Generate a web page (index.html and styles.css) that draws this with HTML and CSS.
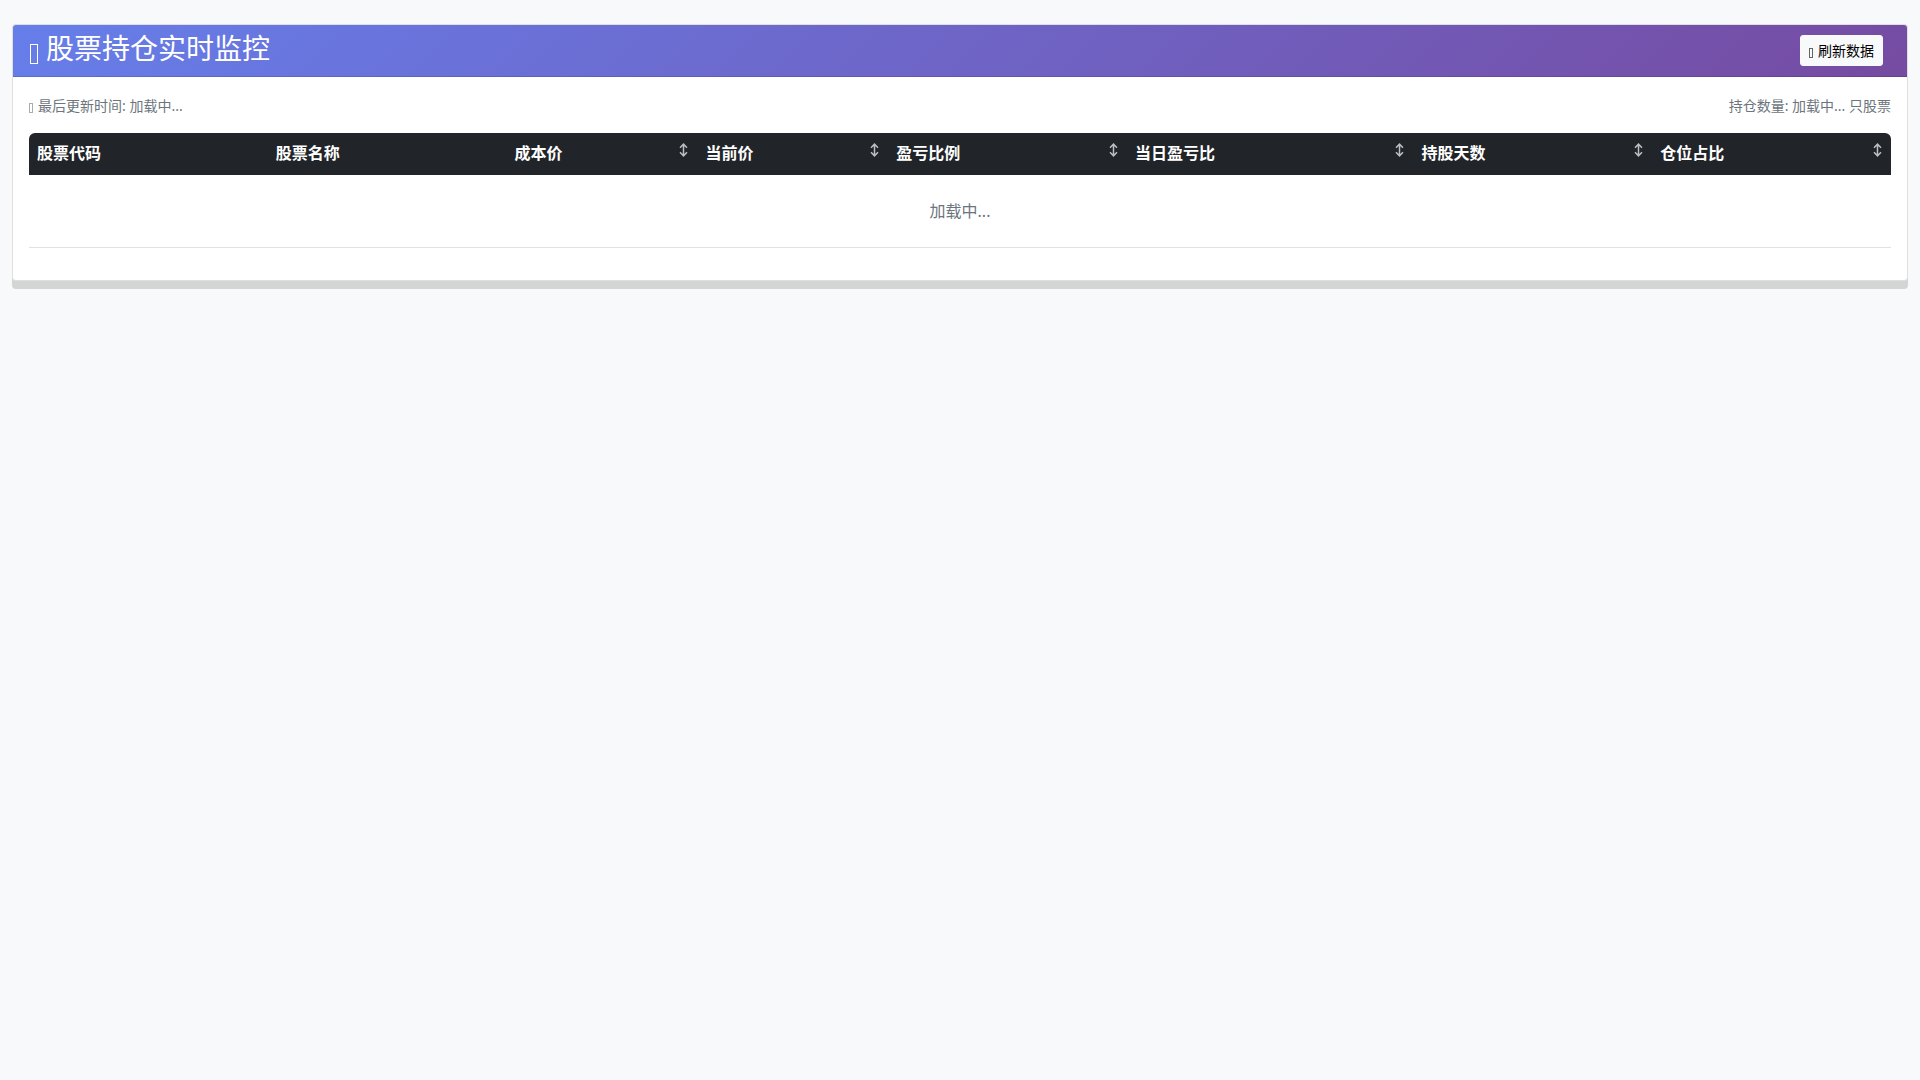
FILE: index.html
```
<!DOCTYPE html>
<html lang="zh-CN">
<head>
    <meta charset="UTF-8">
    <meta name="viewport" content="width=device-width, initial-scale=1.0">
    <title>股票持仓实时监控</title>
    <link rel="stylesheet" href="styles.css">
</head>
<body>
    <svg width="0" height="0" class="sprite">
        <symbol id="sort" viewBox="0 0 9 14">
            <path d="M4.5 1.2V12.8M1 4.8L4.5 1.2L8 4.8M1 9.2L4.5 12.8L8 9.2" fill="none" stroke="currentColor" stroke-width="1.5"/>
        </symbol>
    </svg>
    <main class="container">
        <div class="card">
            <div class="card-header">
                <h1 class="title"><span class="icon icon-lg"></span>股票持仓实时监控</h1>
                <button type="button" class="btn-refresh"><span class="icon"></span>刷新数据</button>
            </div>
            <div class="card-body">
                <div class="info">
                    <span><span class="icon"></span>最后更新时间: <span id="updateTime">加载中...</span></span>
                    <span>持仓数量: <span id="stockCount">加载中...</span> 只股票</span>
                </div>
                <table class="stock-table">
                    <thead>
                        <tr>
                            <th>股票代码</th>
                            <th>股票名称</th>
                            <th class="sortable">成本价<svg class="sort-icon"><use href="#sort"/></svg></th>
                            <th class="sortable">当前价<svg class="sort-icon"><use href="#sort"/></svg></th>
                            <th class="sortable">盈亏比例<svg class="sort-icon"><use href="#sort"/></svg></th>
                            <th class="sortable">当日盈亏比<svg class="sort-icon"><use href="#sort"/></svg></th>
                            <th class="sortable">持股天数<svg class="sort-icon"><use href="#sort"/></svg></th>
                            <th class="sortable">仓位占比<svg class="sort-icon"><use href="#sort"/></svg></th>
                        </tr>
                    </thead>
                    <tbody>
                        <tr>
                            <td colspan="8" class="loading">加载中...</td>
                        </tr>
                    </tbody>
                </table>
            </div>
        </div>
    </main>
</body>
</html>
```
FILE: styles.css
```
* {
    box-sizing: border-box;
}

body {
    margin: 0;
    background: #f8f9fa;
    color: #212529;
    font-family: "Noto Sans", "Noto Sans CJK SC", sans-serif;
    font-size: 16px;
    line-height: 24px;
}

.sprite {
    position: absolute;
}

.container {
    padding: 24px 12px;
}

.card {
    background: #fff;
    border: 1px solid rgba(0, 0, 0, 0.125);
    border-radius: 4px;
    box-shadow: 0 8px 0 rgba(0, 0, 0, 0.15);
}

.card-header {
    display: flex;
    justify-content: space-between;
    align-items: flex-start;
    padding: 8px 24px 8px 16px;
    border-bottom: 1px solid rgba(0, 0, 0, 0.125);
    border-radius: 3px 3px 0 0;
    background: linear-gradient(135deg, #667eea 0%, #764ba2 100%);
    color: #fff;
}

.title {
    margin: 0;
    padding-bottom: 4px;
    font-size: 28px;
    font-weight: 400;
    line-height: 31px;
}

.icon {
    display: inline-block;
    width: 4px;
    height: 10px;
    margin-right: 5px;
    border: 1px solid currentColor;
    vertical-align: -2px;
    opacity: 0.6;
}

.icon-lg {
    width: 8px;
    height: 20px;
    margin: 0 8px 0 1px;
    vertical-align: -5px;
    opacity: 1;
}

.btn-refresh {
    align-self: center;
    padding: 4px 8px;
    border: 1px solid #f8f9fa;
    border-radius: 3px;
    background: #f8f9fa;
    color: #000;
    font-family: inherit;
    font-size: 14px;
    line-height: 21px;
    cursor: pointer;
}

.btn-refresh:hover {
    background: #e2e6ea;
}

.card-body {
    padding: 16px;
}

.info {
    display: flex;
    justify-content: space-between;
    align-items: flex-end;
    margin-bottom: 16px;
    padding-top: 2px;
    color: #6c757d;
    font-size: 14px;
    line-height: 22px;
}

.stock-table {
    width: 100%;
    margin-bottom: 16px;
    border-spacing: 0;
}

.stock-table th {
    position: relative;
    padding: 8px 8px 10px;
    background: #212529;
    color: #fff;
    text-align: left;
    white-space: nowrap;
}

.stock-table th:first-child {
    border-top-left-radius: 6px;
}

.stock-table th:last-child {
    border-top-right-radius: 6px;
}

.sortable {
    cursor: pointer;
}

.sort-icon {
    position: absolute;
    top: 10px;
    right: 9px;
    width: 9px;
    height: 14px;
    opacity: 0.7;
}

.stock-table .loading {
    padding: 24px 8px;
    border-bottom: 1px solid #dee2e6;
    color: #6c757d;
    text-align: center;
}
```
